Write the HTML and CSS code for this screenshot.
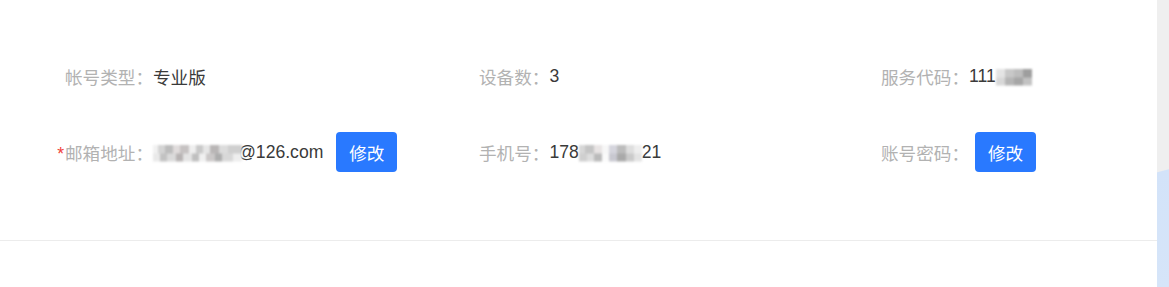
FILE: index.html
```html
<!DOCTYPE html>
<html lang="zh-CN">
<head>
<meta charset="utf-8">
<title>账户信息</title>
<link rel="stylesheet" href="styles.css">
</head>
<body>
<div class="page">
  <main class="panel">
    <section class="info">
      <div class="item">
        <span class="label label-wide">帐号类型：</span>
        <span class="value">专业版</span>
      </div>
      <div class="item">
        <span class="label">设备数：</span>
        <span class="value">3</span>
      </div>
      <div class="item">
        <span class="label">服务代码：</span>
        <span class="value">111</span><span class="mask mask-code"></span>
      </div>
      <div class="item">
        <span class="label label-wide"><span class="req">*</span>邮箱地址：</span>
        <span class="mask mask-mail"></span><span class="value at">@126.com</span>
        <button class="btn">修改</button>
      </div>
      <div class="item">
        <span class="label">手机号：</span>
        <span class="value">178</span><span class="mask mask-phone"></span><span class="value">21</span>
      </div>
      <div class="item">
        <span class="label">账号密码：</span>
        <button class="btn btn-near">修改</button>
      </div>
    </section>
    <hr class="divider">
  </main>
  <aside class="side"></aside>
</div>
</body>
</html>
```

FILE: styles.css
```css
html, body {
  margin: 0;
  padding: 0;
  background: #ffffff;
}

body {
  font-family: "Liberation Sans", "Noto Sans CJK SC", sans-serif;
  font-size: 17.6px;
  color: #3a3a3a;
}

.page {
  display: flex;
  height: 287px;
  overflow: hidden;
}

.panel {
  width: 1157px;
  flex: none;
  background: #ffffff;
  padding-top: 56px;
  box-sizing: border-box;
}

.info {
  display: grid;
  grid-template-columns: 422px 402px 1fr;
  row-gap: 36px;
  padding-left: 57px;
}

.item {
  display: flex;
  align-items: center;
  height: 40px;
  white-space: nowrap;
}

.label {
  color: #b2b2b2;
}

.label-wide {
  width: 96px;
  text-align: right;
}

.req {
  color: #f0413b;
  margin-right: 1px;
}

.value {
  color: #3a3a3a;
}

/* pixelated privacy mosaic */
.mask {
  display: block;
  height: 17px;
  margin-top: 2px;
  filter: blur(1.2px);
  background-size: 100% 50%;
  background-repeat: no-repeat;
}

.mask-mail {
  width: 89px;
  background-image:
    linear-gradient(90deg, #f1f1f1 0 6%, #d4d4d4 6% 14%, #bcbcbc 14% 22%, #e0dcdc 22% 30%, #c6c2c2 30% 40%, #efefef 40% 48%, #c9c9c9 48% 56%, #e6e6e6 56% 64%, #b9b6b6 64% 74%, #dcdcdc 74% 84%, #cfcfcf 84% 100%),
    linear-gradient(90deg, #e9e9e9 0 8%, #c2c2c2 8% 16%, #dadada 16% 26%, #b7b3b3 26% 34%, #e4e4e4 34% 44%, #bfbfbf 44% 52%, #f0f0f0 52% 60%, #cbc8c8 60% 70%, #adadad 70% 78%, #d8d8d8 78% 90%, #eeeeee 90% 100%);
  background-position: 0 0, 0 100%;
}

.at {
  margin-left: -4px;
}

.mask-phone {
  width: 63px;
  background-image:
    linear-gradient(90deg, #d7d7d7 0 10%, #c4c4c4 10% 24%, #e8e4e4 24% 36%, #f7f7f7 36% 48%, #d5d5dd 48% 60%, #bcbcbc 60% 74%, #dedede 74% 88%, #eeeeee 88% 100%),
    linear-gradient(90deg, #cfcfcf 0 12%, #dddddd 12% 24%, #bababa 24% 36%, #fafafa 36% 48%, #c8c8d0 48% 60%, #a9a9a9 60% 74%, #cacaca 74% 88%, #e3e3e3 88% 100%);
  background-position: 0 0, 0 100%;
}

.mask-code {
  width: 36px;
  background-image:
    linear-gradient(90deg, #e4e4e4 0 25%, #c8c8c8 25% 50%, #bdbdbd 50% 75%, #9e9e9e 75% 100%),
    linear-gradient(90deg, #d8d8d8 0 25%, #b5b5b5 25% 50%, #a6a6a6 50% 75%, #c2c2c2 75% 100%);
  background-position: 0 0, 0 100%;
}

.btn {
  margin-left: 13px;
  height: 40px;
  width: 61px;
  padding: 0;
  border: none;
  border-radius: 4px;
  background: #2979ff;
  color: #ffffff;
  font-family: "Noto Sans CJK SC", sans-serif;
  font-size: 17.6px;
  cursor: pointer;
}

.btn-near {
  margin-left: 6px;
}

.divider {
  margin: 68px 0 0;
  border: none;
  border-top: 1px solid #ececec;
  height: 0;
}

.side {
  flex: 1;
  background: linear-gradient(165deg, #efefef 0, #efefef 166px, #d3e3f9 167px, #d6e5f9 100%);
}
```
